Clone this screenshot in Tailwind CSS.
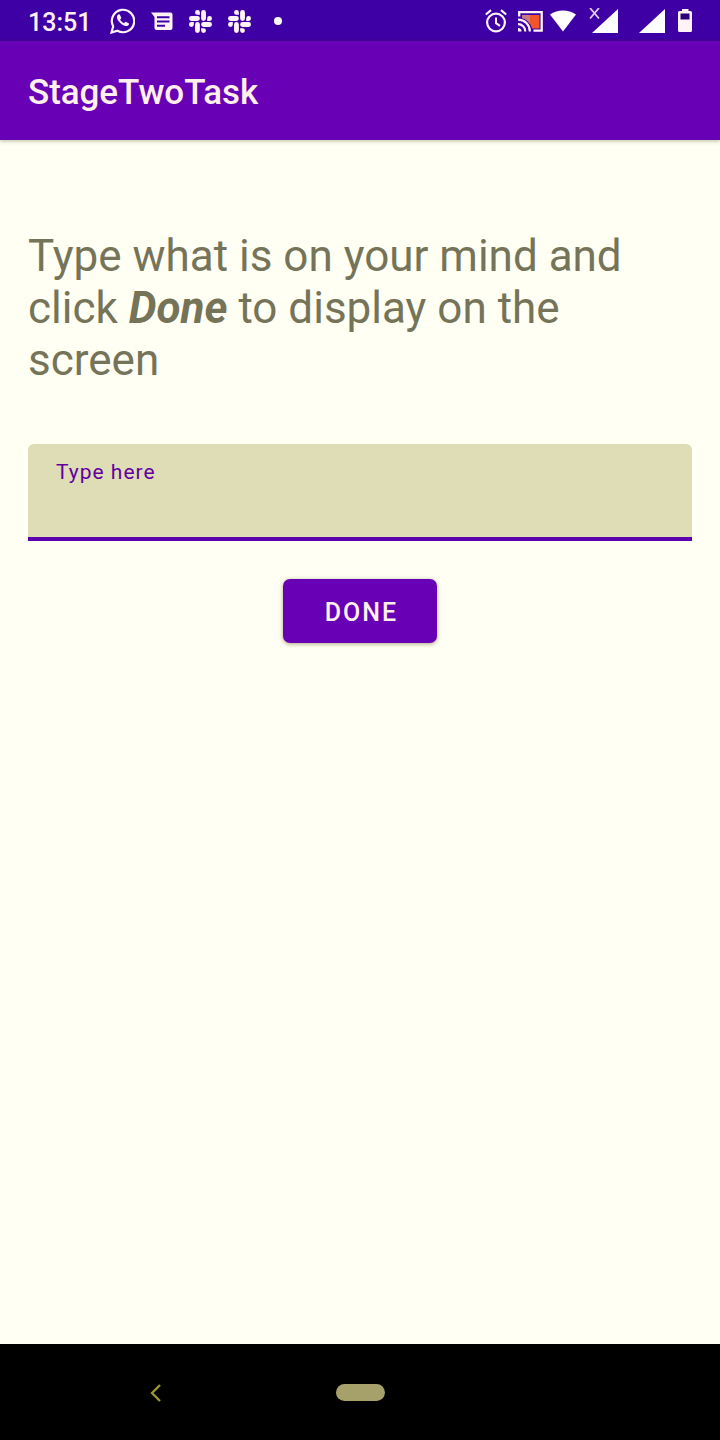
<!DOCTYPE html>
<html lang="en">
<head>
<meta charset="utf-8">
<title>StageTwoTask</title>
<script src="https://cdn.jsdelivr.net/npm/@tailwindcss/browser@4"></script>
</head>
<body class="w-[720px] h-[1440px] flex flex-col overflow-hidden bg-[#fffff4] font-[Roboto,sans-serif]">
<div class="h-[41px] shrink-0 bg-[#3e00a4] text-white flex items-center justify-between pl-7 pr-7 pt-px">
  <div class="flex items-center h-full">
    <span class="w-[82px] text-[25px] leading-10 font-medium pt-1 text-[#fff0f4]">13:51</span>
    <svg class="w-[25px] h-[26px]" viewBox="0 0 25 26" fill="none" stroke="#fff3f6"><path d="M1.5 24.500l1.700-6.200A11.200 11.200 0 1 1 7.500 22.700z" stroke-width="2.200"/><path d="M8.300 6.600c-2.300 1.700-1.600 4.900 1.500 8s6.400 4.700 8.800 2.300c.6-.6.5-1.400 0-1.700l-2.400-1.300c-.5-.2-1 0-1.300.4l-.8 1c-1.800-.7-3.200-2-4-3.700l1-1.200c.2-.3.200-.6.100-1L10 6.900C9.700 6.300 8.800 6.200 8.300 6.600z" fill="#fff3f6" stroke="none"/></svg>
    <svg class="ml-4 w-[22px] h-[19px]" viewBox="0 0 22 19"><path d="M0 .5h19.500a2 2 0 0 1 2 2v13.500a2 2 0 0 1-2 2h-14a2 2 0 0 1-2-2V5z" fill="#fff3f6"/><path d="M6 5.300h12.500M6 9.500h12.500M6 13.700h8" stroke="#3e00a4" stroke-width="2"/></svg>
    <svg class="ml-4 w-[23px] h-[23px]" viewBox="0 0 24 24" fill="#fff3f6"><g id="slack"><path d="M5.042 15.165a2.528 2.528 0 0 1-2.520 2.523A2.528 2.528 0 0 1 0 15.165a2.527 2.527 0 0 1 2.522-2.520h2.520v2.520zM6.313 15.165a2.527 2.527 0 0 1 2.521-2.520 2.527 2.527 0 0 1 2.521 2.520v6.313A2.528 2.528 0 0 1 8.834 24a2.528 2.528 0 0 1-2.521-2.522v-6.313zM8.834 5.042a2.528 2.528 0 0 1-2.521-2.520A2.528 2.528 0 0 1 8.834 0a2.528 2.528 0 0 1 2.521 2.522v2.520H8.834zM8.834 6.313a2.528 2.528 0 0 1 2.521 2.521 2.528 2.528 0 0 1-2.521 2.521H2.522A2.528 2.528 0 0 1 0 8.834a2.528 2.528 0 0 1 2.522-2.521h6.312zM18.956 8.834a2.528 2.528 0 0 1 2.522-2.521A2.528 2.528 0 0 1 24 8.834a2.528 2.528 0 0 1-2.522 2.521h-2.522V8.834zM17.688 8.834a2.528 2.528 0 0 1-2.523 2.521 2.527 2.527 0 0 1-2.520-2.521V2.522A2.527 2.527 0 0 1 15.165 0a2.528 2.528 0 0 1 2.523 2.522v6.312zM15.165 18.956a2.528 2.528 0 0 1 2.523 2.522A2.528 2.528 0 0 1 15.165 24a2.527 2.527 0 0 1-2.520-2.522v-2.522h2.520zM15.165 17.688a2.527 2.527 0 0 1-2.520-2.523 2.526 2.526 0 0 1 2.520-2.520h6.313A2.527 2.527 0 0 1 24 15.165a2.528 2.528 0 0 1-2.522 2.523h-6.313z"/></g></svg>
    <svg class="ml-4 w-[23px] h-[23px]" viewBox="0 0 24 24" fill="#fff3f6"><use href="#slack"/></svg>
    <span class="ml-[23px] w-2 h-2 rounded-full bg-white"></span>
  </div>
  <div class="flex items-center h-full">
    <svg class="w-[22px] h-[24px]" viewBox="0 0 22 24" fill="none" stroke="#fff3f6"><circle cx="11" cy="13.500" r="8.900" stroke-width="2.200"/><path d="M11 8.500v5.700l4 2.600" stroke-width="2"/><path d="M.8 5.500L6 1.200M21.200 5.500L16 1.200" stroke-width="2.200"/></svg>
    <svg class="ml-[11px] w-[25px] h-[21px]" viewBox="0 0 25 21" fill="none"><path d="M4 4h17.500v13.500H14C12 11 9 8.500 4 7z" fill="#f0562a"/><path d="M4 4h8v9C10 10 8 8 4 7z" fill="#c77a80"/><path d="M1.200 5.500V1.200h22.500v18.500H15.500" stroke="#fff3f6" stroke-width="2.300"/><path d="M0 8.700A11.500 11.500 0 0 1 11.800 20.500M0 13.200A7.200 7.200 0 0 1 7.300 20.500" stroke="#fff3f6" stroke-width="2.200"/><path d="M0 17a3.500 3.500 0 0 1 3.500 3.500H0z" fill="#fff3f6"/></svg>
    <svg class="ml-[7px] w-[26px] h-[22px]" viewBox="0 0 26 22"><path d="M0 4.500C7.500-1 18.500-1 26 4.500L13 21.500z" fill="#fff"/></svg>
    <svg class="ml-[13px] w-[30px] h-[26px]" viewBox="0 0 30 26"><path d="M29 1v24H3z" fill="#fff"/><path d="M1 0l9 10.500M10 0L1 10.500" stroke="#e4ccee" stroke-width="1.800"/></svg>
    <svg class="ml-5 w-[26px] h-[26px]" viewBox="0 0 26 26"><path d="M26 1v24H0z" fill="#fff"/></svg>
    <svg class="ml-[13px] w-[14px] h-[24px]" viewBox="0 0 14 24"><path d="M4 0h6.500v2H12.500a1.500 1.500 0 0 1 1.500 1.500v18a1.500 1.500 0 0 1-1.500 1.500h-11a1.500 1.500 0 0 1-1.500-1.500v-18A1.500 1.500 0 0 1 1.500 2H4z" fill="#fff3f6"/><path d="M2.500 4.500h9v6h-9z" fill="#2c0078"/></svg>
  </div>
</div>
<header class="h-[99px] shrink-0 bg-[#6800b6] px-7 pt-[3px] flex items-center shadow-[0_1px_4px_rgba(90,80,20,0.4)]">
  <h1 class="text-[35px] font-medium text-[#fff0ec] leading-none tracking-[-0.05px]">StageTwoTask</h1>
</header>
<main class="flex-1 px-7 flex flex-col">
  <p class="mt-[90px] text-[44px] leading-[52px] text-[#757458]">Type what is on your mind and<br>click <b><i>Done</i></b> to display on the<br>screen</p>
  <div class="mt-[58px] h-[97px] shrink-0 rounded-t-[6px] bg-[#dfddb6] border-b-4 border-[#5f00ad] px-7 pt-4 text-[21px] leading-6 tracking-[1px] text-[#6200a0]">Type here</div>
  <button class="mt-[38px] self-center w-[154px] h-16 rounded-[7px] bg-[#6800b6] text-[#fff0ec] text-[25px] font-medium tracking-[2px] pt-1 pl-[3px] shadow-[0_1px_4px_rgba(90,80,20,0.5)]">DONE</button>
</main>
<nav class="h-24 shrink-0 bg-black flex items-center pl-[150px]">
  <svg class="mt-px w-3 h-[18px]" viewBox="0 0 12 18" fill="none"><path d="M10 1L2 9l8 8" stroke="#a09830" stroke-width="2.300"/></svg>
  <span class="ml-[174px] w-[49px] h-[17px] rounded-full bg-[#a6a06a]"></span>
</nav>
</body>
</html>
